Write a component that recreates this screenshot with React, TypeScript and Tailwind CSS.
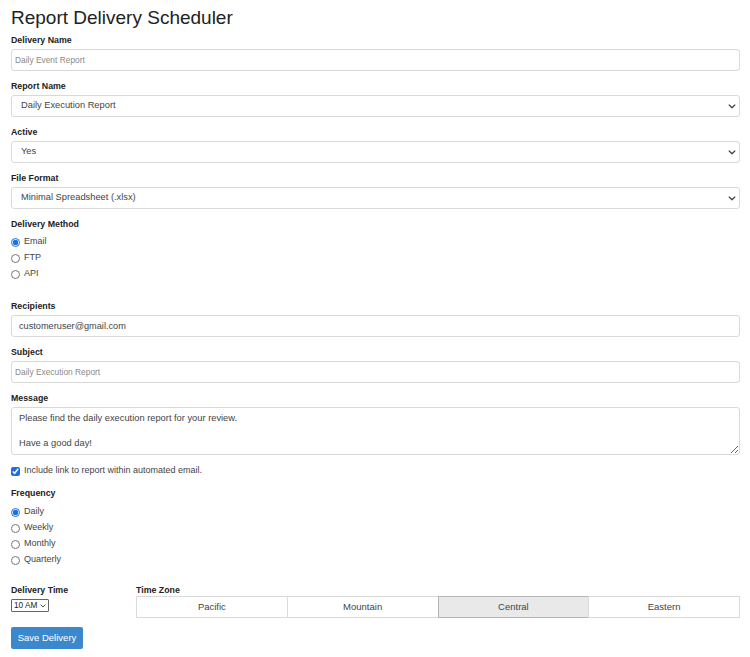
import React from "react";

const font = { fontFamily: '"Liberation Sans", Arial, sans-serif' };

function Chevron({ className = "" }: { className?: string }) {
  return (
    <svg viewBox="0 0 10 6" className={className} fill="none" stroke="#444" strokeWidth="1.6" strokeLinecap="round" strokeLinejoin="round">
      <path d="M1.5 1.2 L5 4.6 L8.5 1.2" />
    </svg>
  );
}

function Label({ children }: { children: React.ReactNode }) {
  return <div className="h-[12px] leading-[12px] text-[8.8px] font-bold text-[#222]">{children}</div>;
}

function TextInput({ value, placeholder }: { value?: string; placeholder?: string }) {
  return (
    <input
      readOnly
      defaultValue={value}
      placeholder={placeholder}
      className={`mt-[3px] block h-[22px] w-full rounded-[3px] border border-[#d9d9d9] bg-white text-[#444] placeholder:text-[#8a8a8a] outline-none ${value ? "px-[7px] text-[9.2px]" : "px-[3px] text-[8.4px]"}`}
    />
  );
}

function Select({ value }: { value: string }) {
  return (
    <div className="relative mt-[3px] h-[22px] w-full">
      <select
        defaultValue={value}
        className="block h-full w-full appearance-none rounded-[3px] border border-[#d9d9d9] bg-white px-[9px] text-[9.3px] text-[#444] outline-none"
      >
        <option>{value}</option>
      </select>
      <Chevron className="pointer-events-none absolute right-[4px] top-[9px] h-[5px] w-[8px]" />
    </div>
  );
}

function Radio({ label, checked, name }: { label: string; checked?: boolean; name: string }) {
  return (
    <label className="flex h-[16px] items-center gap-[4px] text-[9px] text-[#444]">
      <input type="radio" defaultChecked={checked} name={name} className="m-0 h-[9px] w-[9px] accent-[#1f6fe0]" />
      <span>{label}</span>
    </label>
  );
}

export default function App() {
  return (
    <div style={font} className="min-h-[657px] w-[750px] bg-white pl-[11px] pr-[10px] text-[#333]">
      <h1 className="pt-[6px] h-[34px] text-[19px] leading-[24px] font-normal text-[#222]">Report Delivery Scheduler</h1>

      <div className="flex flex-col">
        <div className="mb-[9px]">
          <Label>Delivery Name</Label>
          <TextInput placeholder="Daily Event Report" />
        </div>
        <div className="mb-[9px]">
          <Label>Report Name</Label>
          <Select value="Daily Execution Report" />
        </div>
        <div className="mb-[9px]">
          <Label>Active</Label>
          <Select value="Yes" />
        </div>
        <div className="mb-[9px]">
          <Label>File Format</Label>
          <Select value="Minimal Spreadsheet (.xlsx)" />
        </div>
        <div className="mb-[18px]">
          <Label>Delivery Method</Label>
          <div className="mt-[4px] flex flex-col">
            <Radio name="method" label="Email" checked />
            <Radio name="method" label="FTP" />
            <Radio name="method" label="API" />
          </div>
        </div>
        <div className="mb-[9px]">
          <Label>Recipients</Label>
          <TextInput value="customeruser@gmail.com" />
        </div>
        <div className="mb-[9px]">
          <Label>Subject</Label>
          <TextInput placeholder="Daily Execution Report" />
        </div>
        <div>
          <Label>Message</Label>
          <textarea
            readOnly
            defaultValue={"Please find the daily execution report for your review.\n\nHave a good day!"}
            className="mt-[3px] block h-[48px] w-full rounded-[3px] border border-[#d9d9d9] bg-white px-[7px] py-[4px] text-[9.3px] leading-[12.5px] text-[#444] outline-none"
          />
        </div>
        <label className="mt-[9px] flex h-[14px] items-center gap-[4px] text-[9px] text-[#444]">
          <input type="checkbox" defaultChecked className="m-0 h-[9px] w-[9px] accent-[#1f6fe0]" />
          <span>Include link to report within automated email.</span>
        </label>
        <div className="mt-[9px] mb-[17px]">
          <Label>Frequency</Label>
          <div className="mt-[5px] flex flex-col">
            <Radio name="freq" label="Daily" checked />
            <Radio name="freq" label="Weekly" />
            <Radio name="freq" label="Monthly" />
            <Radio name="freq" label="Quarterly" />
          </div>
        </div>
        <div className="-mt-[1px] flex items-start">
          <div className="w-[125px]">
            <Label>Delivery Time</Label>
            <div className="relative mt-[3px] h-[13px] w-[38px]">
              <select defaultValue="10 AM" className="block h-full w-full appearance-none rounded-[1px] border border-[#666] bg-white pl-[2px] py-0 text-[8.2px] leading-[11px] text-[#222] outline-none">
                <option>10 AM</option>
              </select>
              <Chevron className="pointer-events-none absolute right-[3px] top-[4.5px] h-[4px] w-[6px]" />
            </div>
          </div>
          <div className="flex-1">
            <Label>Time Zone</Label>
            <div className="flex h-[22px]">
              {["Pacific", "Mountain", "Central", "Eastern"].map((z) => (
                <button
                  key={z}
                  className={`flex-1 border text-[9.5px] text-[#444] ${z === "Central" ? "border-[#b5b5b5] bg-[#e9e9e9]" : "border-[#d9d9d9] bg-white"} ${z !== "Pacific" ? "-ml-px" : ""}`}
                >
                  {z}
                </button>
              ))}
            </div>
          </div>
        </div>
        <div className="mt-[9px]">
          <button className="block h-[22px] w-[72px] rounded-[2px] bg-[#3c88cc] text-[9.5px] text-white">Save Delivery</button>
        </div>
      </div>
    </div>
  );
}
